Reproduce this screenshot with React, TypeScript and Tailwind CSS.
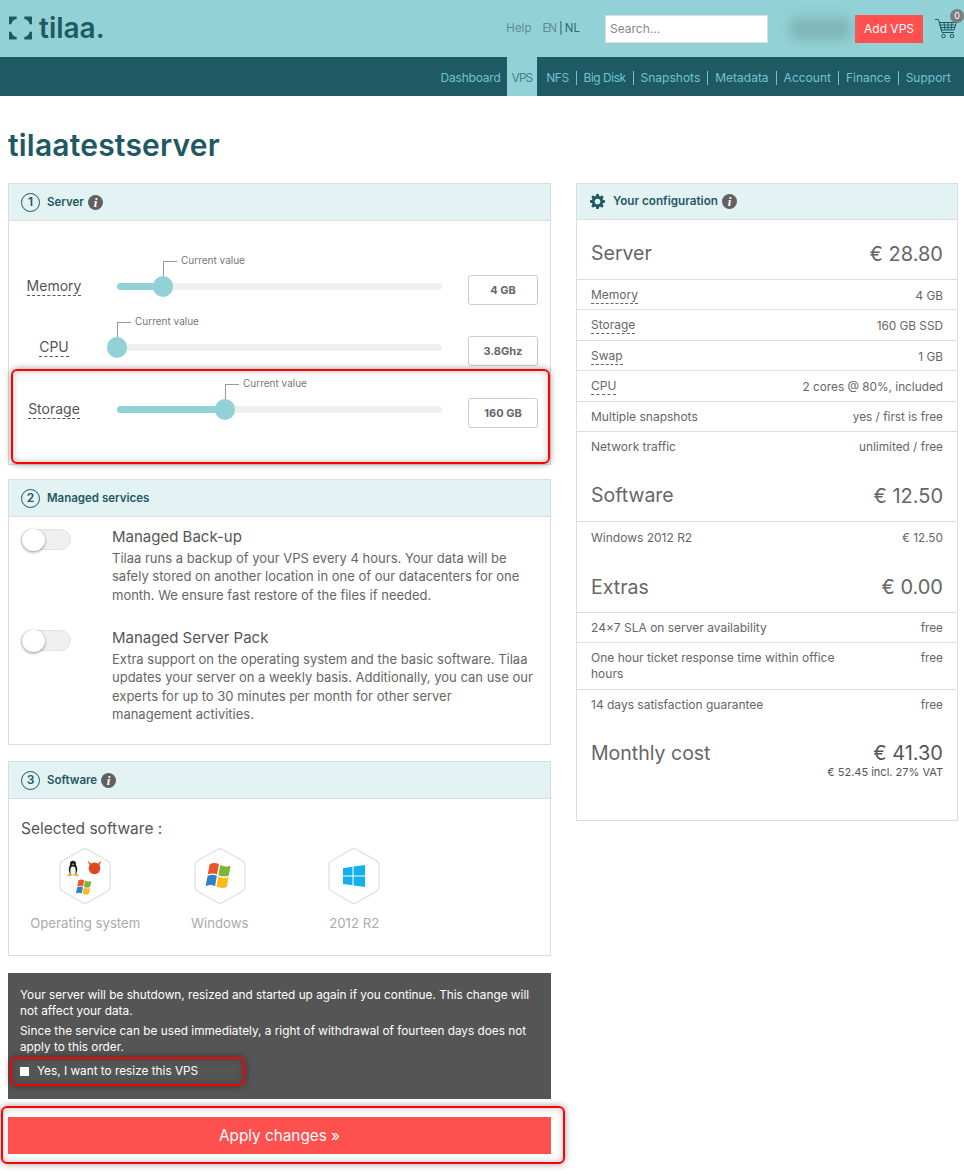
import { ReactNode } from "react";

const navItems = [
  { label: "NFS", className: "tracking-[-0.5px] pl-[9px]" },
  { label: "Big Disk", className: "tracking-[-0.5px]" },
  { label: "Snapshots", className: "" },
  { label: "Metadata", className: "" },
  { label: "Account", className: "" },
  { label: "Finance", className: "" },
  { label: "Support", className: "" }
];

const InfoIcon = () => (
  <span className="inline-flex -ml-[3px] w-[15px] h-[15px] rounded-full bg-[#616161] text-white items-center justify-center font-['Liberation_Serif',serif] italic font-bold text-[13px] leading-none">
    i
  </span>
);

const Step = ({ n }: { n: number }) => (
  <span className="flex w-[19px] h-[19px] rounded-full border border-[#1f5964] items-center justify-center text-[12px] leading-none text-[#1f5964]">
    {n}
  </span>
);

const CardHeader = ({ children }: { children: ReactNode }) => (
  <div className="h-[37px] bg-[#e3f3f3] border-b border-[#dcdcdc] flex items-center pl-3 gap-[7px] text-[11.5px] font-semibold text-[#1f5964]">
    {children}
  </div>
);

const Slider = ({
  label,
  value,
  thumb,
  className
}: {
  label: string;
  value: string;
  thumb: number;
  className: string;
}) => (
  <div className={`flex items-start pl-3 pr-3 ${className}`}>
    <div className="w-[66px] flex justify-center pt-[2px]">
      <span className="text-[14px] leading-[18px] text-[#555] border-b border-dashed border-[#555]">{label}</span>
    </div>
    <div className="relative ml-[30px] mt-[8px] w-[325px] h-[7px] rounded-full bg-[#efefef]">
      <div className="h-full rounded-full bg-[#92d2d6]" style={{ width: thumb }} />
      <div
        className="absolute top-[-7px] w-5 h-[21px] rounded-full bg-[#92d2d6] -ml-[10px]"
        style={{ left: thumb }}
      />
      <div
        className="absolute top-[-22px] w-[14px] h-[15px] border-l border-t border-[#999]"
        style={{ left: thumb }}
      />
      <span
        className="absolute top-[-30px] text-[10px] leading-[14px] text-[#777] whitespace-nowrap"
        style={{ left: thumb + 18 }}
      >
        Current value
      </span>
    </div>
    <div className="ml-[26px] w-[70px] h-[30px] border border-[#ccc] rounded-[3px] flex items-center justify-center text-[11px] font-bold text-[#666]">
      {value}
    </div>
  </div>
);

const Toggle = () => (
  <div className="relative w-[50px] h-[21px] rounded-full bg-[#f0f0f0] border border-[#e2e2e2] shrink-0">
    <div className="absolute left-0 top-[-1px] w-[23px] h-[22px] rounded-full bg-white shadow-[0_1px_3px_rgba(0,0,0,0.45)]" />
  </div>
);

const Service = ({ title, lines, className }: { title: string; lines: string[]; className: string }) => (
  <div className={`flex items-start pl-3 ${className}`}>
    <Toggle />
    <div className="ml-[41px] -mt-[2px]">
      <div className="text-[15px] leading-[20px] text-[#555]">{title}</div>
      <p className="mt-[2px] text-[13px] leading-[18.300px] text-[#666] whitespace-nowrap">
        {lines.map((line) => (
          <span key={line} className="block">
            {line}
          </span>
        ))}
      </p>
    </div>
  </div>
);

const Hexagon = ({ children }: { children: ReactNode }) => (
  <div className="relative w-[54px] h-[58px]">
    <svg viewBox="0 0 54 58" className="w-full h-full" fill="none">
      <path
        d="M24.5 2.4a5 5 0 0 1 5 0l20 11.4a5 5 0 0 1 2.5 4.4v21.6a5 5 0 0 1-2.5 4.4l-20 11.4a5 5 0 0 1-5 0l-20-11.4A5 5 0 0 1 2 39.8V18.2a5 5 0 0 1 2.5-4.4z"
        stroke="#e4e4e4"
        strokeWidth="1.5"
      />
    </svg>
    <div className="absolute inset-0">{children}</div>
  </div>
);

const WinFlag = ({ className }: { className: string }) => (
  <svg viewBox="0 0 28 26" className={className}>
    <path d="M5 3c3-1.600 6-1.600 8.500 0l-1.700 9.200C9.200 10.800 6.300 10.800 3.400 12.200z" fill="#e8562a" />
    <path d="M14.600 3.600c3 1.600 6 1.700 9.400.5l-1.600 9c-3.300 1.200-6.400 1.100-9.400-.4z" fill="#7db534" />
    <path d="M3.200 13.400c3-1.400 5.800-1.400 8.400 0L10 22.600c-2.700-1.400-5.600-1.400-8.500 0z" fill="#2f80c9" />
    <path d="M12.800 14c3 1.500 6 1.600 9.400.4l-1.600 9c-3.300 1.200-6.400 1.100-9.400-.4z" fill="#f7bb1c" />
  </svg>
);

const Tux = () => (
  <svg viewBox="0 0 16 20" className="absolute left-[8px] top-[13px] w-[14px] h-[17px]">
    <ellipse cx="8" cy="11" rx="5" ry="7" fill="#1c1c1c" />
    <circle cx="8" cy="4.500" r="3.500" fill="#1c1c1c" />
    <ellipse cx="8" cy="12.500" rx="3.200" ry="5" fill="#f4f4f4" />
    <path d="M6.500 5l1.500-1 1.500 1-1.500 1.200z" fill="#e9b52b" />
    <path d="M1 18l3.500-3 2 3.500-3 1zM15 18l-3.500-3-2 3.500 3 1z" fill="#e9b52b" />
  </svg>
);

const Daemon = () => (
  <svg viewBox="0 0 18 18" className="absolute left-[29px] top-[13px] w-[15px] h-[15px]">
    <circle cx="9" cy="10" r="7" fill="#e2461c" />
    <path d="M0.500 0.500l4.500 4-1.500 2.500zM17.500 0.500l-4.500 4 1.500 2.500z" fill="#e2461c" />
  </svg>
);

const Win8 = () => (
  <svg viewBox="0 0 24 24" className="absolute left-[15px] top-[17px] w-[24px] h-[24px]">
    <path d="M1 4.200l9.500-1.400v8.700H1zM11.600 2.600L23 1v10.500H11.600zM1 12.600h9.500v8.700L1 19.900zM11.600 12.600H23V23l-11.400-1.600z" fill="#12b0ee" />
  </svg>
);

const Software = ({ label, children }: { label: string; children: ReactNode }) => (
  <div className="w-[134.500px] flex flex-col items-center">
    <Hexagon>{children}</Hexagon>
    <span className="mt-[9px] text-[13.200px] leading-[18px] text-[#aaa] whitespace-nowrap">{label}</span>
  </div>
);

const ConfigHeading = ({ label, price, className }: { label: string; price: string; className: string }) => (
  <div className={`px-[14px] flex items-center justify-between text-[19.500px] text-[#666] ${className}`}>
    <span>{label}</span>
    <span className="text-[20px]">{price}</span>
  </div>
);

const ConfigRow = ({
  label,
  value,
  dashed = false,
  last = false,
  pad = "pt-[7px] pb-[6.400px]"
}: {
  label: string;
  value: string;
  dashed?: boolean;
  last?: boolean;
  pad?: string;
}) => (
  <div className={`flex justify-between items-start px-[14px] text-[12px] leading-4 text-[#666] ${pad} ${last ? "" : "border-b border-[#ddd]"}`}>
    <span className={`max-w-[250px] ${dashed ? "border-b border-dashed border-[#666] leading-[14px] h-[16px]" : ""}`}>{label}</span>
    <span className="text-[11.800px]">{value}</span>
  </div>
);

const Annotation = ({ className }: { className: string }) => (
  <div className={`absolute border-2 border-[#f00] rounded-[6px] shadow-[0_0_7px_rgba(0,0,0,0.4),inset_0_0_7px_rgba(0,0,0,0.25)] pointer-events-none ${className}`} />
);

export default function App() {
  const lowPad = "pt-[8px] pb-[5.400px]";

  return (
    <div className="relative w-[964px] h-[1174px] bg-white overflow-hidden font-['Inter',sans-serif]">
      {/* top bar */}
      <header className="h-[57px] bg-[#92d2d6] flex items-center">
        <div className="ml-[9px] flex items-center -mt-[1px]">
          <svg viewBox="0 0 24 24" className="w-[23px] h-[24px]" fill="#1f5964">
            <path d="M0 0h8v2.500C5 3 3 5 2.500 8H0zM24 0h-8v2.500c3 .5 5 2.500 5.500 5.500H24zM0 24h8v-2.500C5 21 3 19 2.500 16H0zM24 24h-8v-2.500c3-.5 5-2.500 5.500-5.500H24z" />
          </svg>
          <span className="ml-[7px] text-[28px] leading-none font-semibold text-[#1f5964]">tilaa.</span>
        </div>
        <div className="ml-auto flex items-center text-[11.500px]">
          <span className="text-[#5f8a90]">Help</span>
          <span className="ml-[11px] tracking-[-1px] text-[#5f8a90]">EN</span>
          <span className="ml-[3px] mr-[2px] text-[#1f5964]">|</span>
          <span className="text-[#2f6a74]">NL</span>
          <input
            placeholder="Search..."
            className="ml-[25px] w-[163px] h-[28px] bg-white border border-[#ddd] px-[4px] text-[12px] placeholder:text-[#888]"
            readOnly
          />
          <div className="ml-[22px] w-[60px] h-[22px] bg-[#7fb5b8] blur-[6px]" />
          <button className="w-[68px] h-[28px] ml-[5px] bg-[#ff5050] text-white text-[12px]">Add VPS</button>
          <div className="relative ml-[12px] mr-[7px] w-[22px] h-[22px]">
            <svg viewBox="0 0 22 22" className="w-[22px] h-[22px]" fill="none" stroke="#1f5964" strokeWidth="1">
              <path d="M0 1.500h3.500l3.500 13h12" />
              <path d="M4.500 4.500h17l-2.500 7.500H6.500z" />
              <path d="M9 4.500l1 7.500M13 4.500v7.500M17 4.500l-1 7.500M5.300 7h15.300M6 9.500h13.700" />
              <circle cx="8.500" cy="18" r="1.800" />
              <circle cx="17" cy="18" r="1.800" />
            </svg>
            <span className="absolute right-[-7px] top-[-9px] w-[14px] h-[14px] rounded-full bg-[#7b7f80] text-white text-[9px] leading-[14px] text-center">
              0
            </span>
          </div>
        </div>
      </header>

      {/* nav */}
      <nav className="h-[39px] bg-[#1f5964] flex justify-end items-stretch pr-[13px] text-[12px] text-[#6cc5cf]">
        <span className="flex items-center pt-[2px] pr-[6px] tracking-[-0.2px]">Dashboard</span>
        <span className="flex items-center pt-[2px] px-[5px] bg-[#92d2d6] text-[#4b7f88] tracking-[-1px]">VPS</span>
        {navItems.map((item, i) => (
          <span key={item.label} className="flex items-center pt-[2px]">
            <span className={`${i === navItems.length - 1 ? "pl-[7px]" : "px-[7px] border-r border-[#6cc5cf]"} leading-[14px] ${item.className}`}>
              {item.label}
            </span>
          </span>
        ))}
      </nav>

      <main className="px-2">
        <h1 className="pt-[31px] pb-[20px] text-[30px] leading-[36px] tracking-[0.2px] font-semibold text-[#1f5964]">tilaatestserver</h1>
        <div className="flex gap-[25px] items-start">
          {/* left column */}
          <div className="w-[543px] shrink-0">
            <section className="border border-[#dcdcdc] h-[282px]">
              <CardHeader>
                <Step n={1} />
                <span className="pt-[1px]">Server</span>
                <InfoIcon />
              </CardHeader>
              <div className="pt-[54px]">
                <Slider label="Memory" value="4 GB" thumb={46} className="h-[61px]" />
                <Slider label="CPU" value="3.8Ghz" thumb={0} className="h-[62px]" />
                <Slider label="Storage" value="160 GB" thumb={108} className="h-[62px]" />
              </div>
            </section>

            <section className="mt-[14px] border border-[#dcdcdc] h-[266px]">
              <CardHeader>
                <Step n={2} />
                <span className="pt-[1px]">Managed services</span>
              </CardHeader>
              <div className="pt-[12px]">
                <Service
                  title="Managed Back-up"
                  className="h-[101px]"
                  lines={[
                    "Tilaa runs a backup of your VPS every 4 hours. Your data will be",
                    "safely stored on another location in one of our datacenters for one",
                    "month. We ensure fast restore of the files if needed."
                  ]}
                />
                <Service
                  title="Managed Server Pack"
                  className=""
                  lines={[
                    "Extra support on the operating system and the basic software. Tilaa",
                    "updates your server on a weekly basis. Additionally, you can use our",
                    "experts for up to 30 minutes per month for other server",
                    "management activities."
                  ]}
                />
              </div>
            </section>

            <section className="mt-[16px] border border-[#dcdcdc] h-[195px]">
              <CardHeader>
                <Step n={3} />
                <span className="pt-[1px]">Software</span>
                <InfoIcon />
              </CardHeader>
              <div className="pl-3 pt-[20px] text-[15.500px] leading-[20px] text-[#555]">Selected software :</div>
              <div className="flex pl-[9px] mt-[8px]">
                <Software label="Operating system">
                  <Tux />
                  <Daemon />
                  <WinFlag className="absolute left-[17px] top-[31px] w-[19px] h-[18px]" />
                </Software>
                <Software label="Windows">
                  <WinFlag className="absolute left-[11px] top-[14px] w-[31px] h-[29px]" />
                </Software>
                <Software label="2012 R2">
                  <Win8 />
                </Software>
              </div>
            </section>

            <section className="mt-[17px] h-[126px] bg-[#555] px-3 pt-[14px] text-[11.800px] leading-4 text-white">
              <p>
                Your server will be shutdown, resized and started up again if you continue. This change will
                <br />
                not affect your data.
              </p>
              <p className="mt-1">
                Since the service can be used immediately, a right of withdrawal of fourteen days does not
                <br />
                apply to this order.
              </p>
              <label className="mt-[8px] flex items-center">
                <span className="w-[9px] h-[9px] bg-white" />
                <span className="ml-[8px]">Yes, I want to resize this VPS</span>
              </label>
            </section>

            <button className="block w-full mt-[18px] h-[37px] pt-[1px] bg-[#ff5050] text-white text-[15.300px]">Apply changes »</button>
          </div>

          {/* right column */}
          <aside className="w-[382px] h-[638px] shrink-0 border border-[#dcdcdc]">
            <div className="h-[36px] bg-[#e3f3f3] border-b border-[#dcdcdc] flex items-center pl-[13px] text-[11.700px] font-semibold text-[#1f5964]">
              <svg viewBox="0 0 16 16" className="w-[15px] h-[15px]" fill="#1f5964">
                <path
                  fillRule="evenodd"
                  d="M6.700 0h2.600l.4 2.100 1.300.5L12.800 1.400l1.800 1.800-1.200 1.800.5 1.300 2.100.4v2.600l-2.100.4-.5 1.300 1.200 1.800-1.800 1.800-1.800-1.200-1.300.5-.4 2.100H6.700l-.4-2.100-1.300-.5-1.800 1.200-1.800-1.800 1.200-1.800-.5-1.300L0 9.300V6.700l2.100-.4.500-1.300-1.200-1.800 1.800-1.800 1.800 1.200 1.300-.5zM8 5a3 3 0 1 0 0 6 3 3 0 0 0 0-6z"
                />
              </svg>
              <span className="ml-2 mr-[7px]">Your configuration</span>
              <InfoIcon />
            </div>
            <ConfigHeading label="Server" price="€ 28.80" className="h-[60px] pt-[9px] border-b border-[#ddd]" />
            <ConfigRow label="Memory" value="4 GB" dashed pad={lowPad} />
            <ConfigRow label="Storage" value="160 GB SSD" dashed pad={lowPad} />
            <ConfigRow label="Swap" value="1 GB" dashed pad={lowPad} />
            <ConfigRow label="CPU" value="2 cores @ 80%, included" dashed pad={lowPad} />
            <ConfigRow label="Multiple snapshots" value="yes / first is free" />
            <ConfigRow label="Network traffic" value="unlimited / free" last />
            <ConfigHeading label="Software" price="€ 12.50" className="h-[61px] pt-[9px] border-b border-[#ddd]" />
            <ConfigRow label="Windows 2012 R2" value="€ 12.50" last pad={lowPad} />
            <ConfigHeading label="Extras" price="€ 0.00" className="h-[61px] pt-[11px] border-b border-[#ddd]" />
            <ConfigRow label="24×7 SLA on server availability" value="free" />
            <ConfigRow label="One hour ticket response time within office hours" value="free" />
            <ConfigRow label="14 days satisfaction guarantee" value="free" last />
            <div className="pt-[21px] px-[14px] flex justify-between text-[#666]">
              <span className="text-[19.500px] leading-[26px]">Monthly cost</span>
              <div className="text-right text-[#555]">
                <div className="text-[20px] leading-[26px]">€ 41.30</div>
                <div className="text-[11px] leading-[12px]">€ 52.45 incl. 27% VAT</div>
              </div>
            </div>
          </aside>
        </div>
      </main>

      {/* red annotations from the screenshot */}
      <Annotation className="left-[11px] top-[369px] w-[539px] h-[95px]" />
      <Annotation className="left-[10px] top-[1057px] w-[235px] h-[29px]" />
      <Annotation className="left-[1px] top-[1106px] w-[564px] h-[58px]" />
    </div>
  );
}
